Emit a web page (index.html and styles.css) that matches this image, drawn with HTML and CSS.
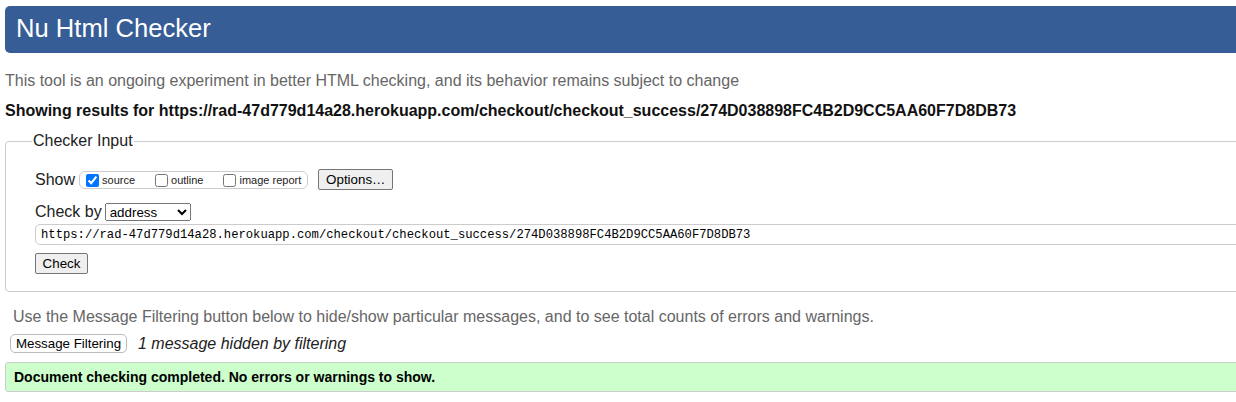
FILE: index.html
```html
<!DOCTYPE html>
<html lang="en">
<head>
<meta charset="utf-8">
<title>Nu Html Checker</title>
<link rel="stylesheet" href="styles.css">
</head>
<body>
<div class="page">
  <header class="banner"><h1 class="title">Nu Html Checker</h1></header>
  <p class="intro">This tool is an ongoing experiment in better HTML checking, and its behavior remains subject to change</p>
  <p class="showing">Showing results for https://rad-47d779d14a28.herokuapp.com/checkout/checkout_success/274D038898FC4B2D9CC5AA60F7D8DB73</p>
  <fieldset class="checker">
    <legend class="legend">Checker Input</legend>
    <div class="row show-row">
      <span class="label">Show</span>
      <span class="options-box">
        <label class="opt"><input type="checkbox" class="cb" checked>source</label>
        <label class="opt"><input type="checkbox" class="cb">outline</label>
        <label class="opt"><input type="checkbox" class="cb">image report</label>
      </span>
      <button class="btn options-btn" type="button">Options…</button>
    </div>
    <div class="row checkby-row">
      <span class="label">Check by</span>
      <select class="sel"><option>address</option></select>
    </div>
    <input class="url" type="text" value="https://rad-47d779d14a28.herokuapp.com/checkout/checkout_success/274D038898FC4B2D9CC5AA60F7D8DB73">
    <div class="row"><button class="btn check-btn" type="button">Check</button></div>
  </fieldset>
  <p class="filter-note">Use the Message Filtering button below to hide/show particular messages, and to see total counts of errors and warnings.</p>
  <div class="filter-row">
    <button class="filter-btn" type="button">Message Filtering</button>
    <span class="hidden-note">1 message hidden by filtering</span>
  </div>
  <div class="success">Document checking completed. No errors or warnings to show.</div>
</div>
</body>
</html>
```
FILE: styles.css
```css
html, body {
  margin: 0;
  padding: 0;
  overflow: hidden;
  background: #fff;
}
body {
  font-family: "Liberation Sans", Arial, sans-serif;
  font-size: 16px;
  color: #111;
}
.page {
  width: 1300px;
  padding: 6px 0 0 5px;
  display: flex;
  flex-direction: column;
  align-items: flex-start;
}
.banner {
  width: 1290px;
  height: 47px;
  background: #365d95;
  border-radius: 5px;
  display: flex;
  align-items: center;
  padding-left: 11px;
  box-sizing: border-box;
}
.title {
  margin: 0;
  font-size: 25.6px;
  font-weight: normal;
  color: #fff;
  line-height: 1;
  position: relative;
  top: -1px;
}
.intro {
  margin: 19px 0 0 0;
  color: #666;
  line-height: 18px;
}
.showing {
  margin: 12px 0 0 0;
  font-weight: bold;
  color: #111;
  line-height: 18px;
}
.checker {
  margin: 12px 0 0 0;
  width: 1290px;
  box-sizing: border-box;
  border: 1px solid #ccc;
  border-radius: 4px;
  padding: 19px 0 17px 29px;
  display: flex;
  flex-direction: column;
  align-items: flex-start;
}
.legend {
  padding: 0 1px;
  margin-left: -3px;
  color: #222;
  font-size: 16px;
}
.row {
  display: flex;
  align-items: center;
}
.label {
  color: #222;
  font-size: 16px;
}
.options-box {
  margin-left: 4px;
  display: flex;
  align-items: center;
  border: 1px solid #ccc;
  border-radius: 6px;
  height: 18px;
  padding: 1px 6px 0 6px;
  box-sizing: border-box;
}
.opt {
  display: flex;
  align-items: center;
  font-size: 11px;
  color: #222;
  margin-right: 20px;
}
.opt:last-child {
  margin-right: 0;
}
.cb {
  margin: 0 3px 0 0;
  width: 13px;
  height: 13px;
}
.btn {
  font-family: "Liberation Sans", Arial, sans-serif;
  font-size: 13.33px;
  color: #000;
  background: #efefef;
  border: 1px solid #767676;
  border-radius: 2px;
  padding: 1px 6px;
}
.options-btn {
  margin-left: 10px;
  height: 21px;
  width: 75px;
}
.checkby-row {
  margin-top: 13px;
}
.sel {
  margin-left: 3px;
  width: 86px;
  height: 18px;
  font-family: "Liberation Sans", Arial, sans-serif;
  font-size: 13.33px;
  color: #000;
  padding: 0;
}
.url {
  margin-top: 3px;
  width: 1240px;
  height: 21px;
  box-sizing: border-box;
  border: 1px solid #ccc;
  border-radius: 5px;
  padding: 0 5px;
  font-family: "Liberation Mono", "Courier New", monospace;
  font-size: 12.2px;
  color: #000;
}
.check-btn {
  margin-top: 8px;
  height: 21px;
  width: 53px;
}
.filter-note {
  margin: 16px 0 0 8px;
  color: #666;
  line-height: 18px;
}
.filter-row {
  margin-top: 8px;
  margin-left: 5px;
  display: flex;
  align-items: center;
}
.filter-btn {
  font-family: "Liberation Sans", Arial, sans-serif;
  font-size: 13.33px;
  color: #000;
  background: #fff;
  border: 1px solid #bbb;
  border-radius: 5px;
  height: 19px;
  width: 117px;
  padding: 0 4px;
}
.hidden-note {
  margin-left: 11px;
  font-style: italic;
  color: #222;
}
.success {
  margin-top: 9px;
  width: 1290px;
  box-sizing: border-box;
  height: 30px;
  background: #ccffcc;
  border: 1px solid #ccc;
  border-radius: 3px;
  padding-left: 8px;
  display: flex;
  align-items: center;
  font-weight: bold;
  font-size: 14px;
  color: #000;
}
```
